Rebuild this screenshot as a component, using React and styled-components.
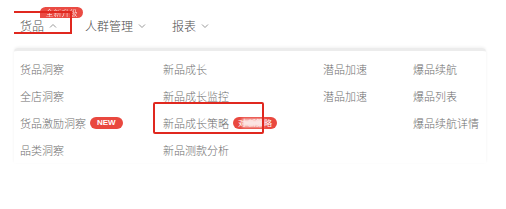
import React from "react";
import styled, { createGlobalStyle } from "styled-components";

const GlobalStyle = createGlobalStyle`
  html, body {
    margin: 0;
    padding: 0;
    background: #fff;
    font-family: "Noto Sans CJK SC", "Noto Sans", sans-serif;
  }
`;

const Page = styled.div`
  width: 506px;
  height: 209px;
  background: #fff;
  overflow: hidden;
`;

const Nav = styled.div`
  display: flex;
  align-items: center;
  height: 48px;
  padding: 3px 0 0 20px;
  box-sizing: border-box;
`;

const NavItem = styled.div`
  position: relative;
  display: flex;
  align-items: center;
  gap: 5px;
  margin-right: ${(p) => p.$gap}px;
  font-size: 12px;
  font-weight: 300;
  color: #4a4a4a;
  line-height: 16px;
`;

const Chevron = styled.svg`
  width: 8px;
  height: 8px;
  color: #999;
`;

const TopBadge = styled.span`
  position: absolute;
  left: 20px;
  top: -11px;
  width: 43px;
  height: 11px;
  background: #ea4b43;
  border-radius: 6px 6px 6px 0;
  color: #fff;
  font-size: 8px;
  line-height: 11px;
  text-align: center;
  filter: blur(0.6px);
`;

const NavHighlight = styled.span`
  position: absolute;
  left: -6px;
  top: -7px;
  width: 56px;
  height: 19px;
  border: 2px solid #e0281f;
  border-left: none;
`;

const Panel = styled.div`
  margin: 0 20px 0 14px;
  border-top: 3px solid #ececec;
  border-radius: 4px 4px 0 0;
  box-shadow: 0 -1px 3px rgba(0, 0, 0, 0.06);
  padding: 4px 0 0 6px;
  display: grid;
  grid-template-columns: 143px 160px 90px 1fr;
  grid-template-rows: repeat(4, 27px);
  grid-auto-flow: column;
`;

const Cell = styled.div`
  position: relative;
  display: flex;
  align-items: center;
  gap: 4px;
  font-size: 11px;
  font-weight: 300;
  color: #6e6e6e;
`;

const Pill = styled.span`
  display: inline-block;
  height: 12px;
  line-height: 12px;
  padding: 0 ${(p) => p.$pad}px;
  border-radius: 6px;
  background: #e9483f;
  color: #fff;
  font-size: 8px;
  font-weight: 700;
  font-family: "Liberation Sans", Arial, sans-serif;
`;

const BlurPill = styled(Pill)`
  width: 44px;
  padding: 0;
  position: relative;
  box-sizing: border-box;
  font-weight: 400;
  font-family: "Noto Sans CJK SC", sans-serif;
  text-align: center;
  &::after {
    content: "";
    position: absolute;
    left: 9px;
    top: 2px;
    width: 22px;
    height: 8px;
    background: #fbe5e3;
    filter: blur(1.5px);
  }
`;

const CellHighlight = styled.span`
  position: absolute;
  left: -10px;
  top: -7px;
  width: 107px;
  height: 28px;
  border: 2px solid #e0281f;
  border-radius: 2px;
`;

const Up = () => (
  <Chevron viewBox="0 0 8 8" fill="none" stroke="currentColor" strokeWidth="1">
    <path d="M1 5.5 L4 2.5 L7 5.5" />
  </Chevron>
);

const Down = () => (
  <Chevron viewBox="0 0 8 8" fill="none" stroke="currentColor" strokeWidth="1">
    <path d="M1 2.5 L4 5.5 L7 2.5" />
  </Chevron>
);

const columns = [
  [
    { label: "货品洞察" },
    { label: "全店洞察" },
    { label: "货品激励洞察", badge: "new" },
    { label: "品类洞察" },
  ],
  [
    { label: "新品成长" },
    { label: "新品成长监控" },
    { label: "新品成长策略", badge: "blur", highlight: true },
    { label: "新品测款分析" },
  ],
  [{ label: "潜品加速" }, { label: "潜品加速" }, null, null],
  [{ label: "爆品续航" }, { label: "爆品列表" }, { label: "爆品续航详情" }, null],
];

export default function App() {
  return (
    <Page>
      <GlobalStyle />
      <Nav>
        <NavItem $gap={28}>
          <TopBadge>全新升级</TopBadge>
          货品
          <Up />
          <NavHighlight />
        </NavItem>
        <NavItem $gap={26}>
          人群管理
          <Down />
        </NavItem>
        <NavItem $gap={0}>
          报表
          <Down />
        </NavItem>
      </Nav>
      <Panel>
        {columns.flat().map((item, i) =>
          item ? (
            <Cell key={i}>
              {item.label}
              {item.badge === "new" && <Pill $pad={7}>NEW</Pill>}
              {item.badge === "blur" && <BlurPill>对 新策略</BlurPill>}
              {item.highlight && <CellHighlight />}
            </Cell>
          ) : (
            <Cell key={i} />
          )
        )}
      </Panel>
    </Page>
  );
}
